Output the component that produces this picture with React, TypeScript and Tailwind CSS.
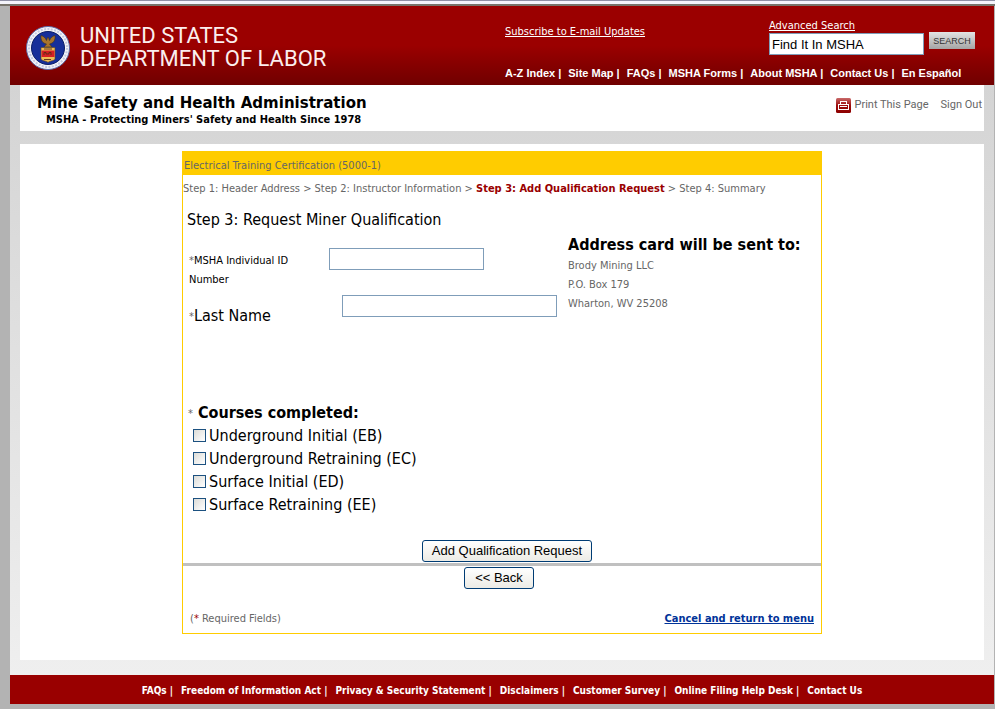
import { useState } from 'react'

const headerLinks = ['A-Z Index', 'Site Map', 'FAQs', 'MSHA Forms', 'About MSHA', 'Contact Us', 'En Español']

const footerLinks = [
  'FAQs',
  'Freedom of Information Act',
  'Privacy & Security Statement',
  'Disclaimers',
  'Customer Survey',
  'Online Filing Help Desk',
  'Contact Us',
]

const courses = [
  { code: 'EB', name: 'Underground Initial' },
  { code: 'EC', name: 'Underground Retraining' },
  { code: 'ED', name: 'Surface Initial' },
  { code: 'EE', name: 'Surface Retraining' },
]

function Seal() {
  return (
    <svg className="h-11 w-11 shrink-0" viewBox="0 0 44 44" aria-hidden="true">
      <circle cx="22" cy="22" r="21.5" fill="#f4f4f8" stroke="#5c6ba8" strokeWidth="1" />
      <circle cx="22" cy="22" r="19" fill="none" stroke="#c3c9e2" strokeWidth="2" strokeDasharray="2 1.4" />
      <circle cx="22" cy="22" r="16.5" fill="#172f9a" stroke="#0c1e66" strokeWidth="1" />
      <path d="M15 9.500c-.5 5 1.500 7.500 5.500 8.500l-2.500 3h8l-2.500-3c4-1 6-3.500 5.500-8.500-2.500.5-4.500 2.500-5.500 5l-1-3h-1l-1 3c-1-2.500-3-4.500-5.500-5z" fill="#a8742c" stroke="#40301c" strokeWidth=".6" />
      <path d="M15 21.500h14v11c0 2.500-5 2-7 4-2-2-7-1.500-7-4z" fill="#efbb55" stroke="#5a4320" strokeWidth=".6" />
      <path d="M15.500 24.500h13v6.500h-13z" fill="#d51f24" />
      <path d="M18 29v-2.500h2v1.500h3v-1.500h2v2.500M18 33.500h7M18 23h8" fill="none" stroke="#5c2a14" strokeWidth=".9" />
    </svg>
  )
}

function PrintIcon() {
  return (
    <svg className="h-[15px] w-[15px] shrink-0" viewBox="0 0 15 15" aria-hidden="true">
      <defs>
        <linearGradient id="print-bg" x1="0" y1="0" x2="0" y2="1">
          <stop offset="0" stopColor="#c96a6a" />
          <stop offset=".5" stopColor="#9d0d0d" />
          <stop offset="1" stopColor="#8d0000" />
        </linearGradient>
      </defs>
      <rect width="15" height="15" rx="1.500" fill="url(#print-bg)" />
      <path d="M4 3h7v3h2v6H2V6h2zM5 4v2h5V4zM3 7v4h9V7z" fill="#fff" fillRule="evenodd" />
      <path d="M4 8h7v1H4z" fill="#fff" />
    </svg>
  )
}

function Header() {
  const [query, setQuery] = useState('Find It In MSHA')

  return (
    <header className="flex h-[79px] justify-between bg-linear-to-b from-[#9b0000] from-50% to-[#700000] pl-4 text-white">
      <div className="flex items-center gap-2.5 pt-1">
        <Seal />
        <p className="mb-0.5 font-['Roboto','Liberation_Sans',sans-serif] text-[22px] leading-[23px] text-[#fbeeee]">
          UNITED STATES
          <br />
          DEPARTMENT OF LABOR
        </p>
      </div>
      <div className="flex w-[489px] flex-col justify-between pt-3.5 pb-1">
        <div className="flex">
          <a href="#subscribe" className="mt-1 w-[264px] text-[11px] leading-4 underline">
            Subscribe to E-mail Updates
          </a>
          <form className="flex items-end gap-[5px]" onSubmit={(event) => event.preventDefault()}>
            <div className="flex flex-col">
              <a href="#advanced" className="text-[11px] leading-3 underline">
                Advanced Search
              </a>
              <input
                aria-label="Search MSHA"
                className="mt-px h-[22px] w-[155px] border border-[#7f9db9] bg-white px-0.5 font-['Liberation_Sans',sans-serif] text-[13px] text-black outline-none"
                value={query}
                onChange={(event) => setQuery(event.target.value)}
              />
            </div>
            <button
              type="submit"
              className="mb-1.5 h-[17px] w-[46px] bg-linear-to-b from-[#e3e3e3] to-[#a5a5a5] font-['Liberation_Sans',sans-serif] text-[9px] leading-4 text-[#333]"
            >
              SEARCH
            </button>
          </form>
        </div>
        <nav className="flex gap-[7px] font-['Liberation_Sans',sans-serif] text-[11px] leading-4 font-bold whitespace-nowrap">
          {headerLinks.map((link, index) => (
            <span key={link}>
              <a href="#nav">{link}</a>
              {index < headerLinks.length - 1 ? ' |' : ''}
            </span>
          ))}
        </nav>
      </div>
    </header>
  )
}

function Breadcrumb() {
  return (
    <p className="mt-1 text-[11px] leading-[19px] text-[#666]">
      Step 1: Header Address &gt; Step 2: Instructor Information &gt;{' '}
      <strong className="text-[#900]">Step 3: Add Qualification Request</strong> &gt; Step 4: Summary
    </p>
  )
}

function QualificationForm() {
  const [minerId, setMinerId] = useState('')
  const [lastName, setLastName] = useState('')
  const [selected, setSelected] = useState<string[]>([])

  const toggleCourse = (code: string) => {
    setSelected((prev) => (prev.includes(code) ? prev.filter((item) => item !== code) : [...prev, code]))
  }

  const buttonClass =
    "h-[22px] rounded-[3px] border border-[#003c74] bg-linear-to-b from-white to-[#ecebe5] font-['Liberation_Sans',sans-serif] text-[13px] leading-5"

  return (
    <form onSubmit={(event) => event.preventDefault()}>
      <h1 className="mt-3 pl-1 text-[16px] leading-5">Step 3: Request Miner Qualification</h1>

      <div className="flex">
        <div className="w-[385px] pt-[18px] pl-1.5">
          <div className="flex items-start">
            <label htmlFor="miner-id" className="mt-[3px] w-[140px] text-[11px] leading-[19px]">
              <span className="block">
                <span className="text-[#666]">*</span>MSHA Individual ID
              </span>
              <span className="block">Number</span>
            </label>
            <input
              id="miner-id"
              className="h-[22px] w-[155px] border border-[#7f9db9] px-1 text-[13px] outline-none"
              value={minerId}
              onChange={(event) => setMinerId(event.target.value)}
            />
          </div>
          <div className="mt-1.5 flex items-start">
            <label htmlFor="last-name" className="mt-[11px] w-[153px] text-[16px] leading-5">
              <span className="align-middle text-[11px] text-[#666]">*</span>Last Name
            </label>
            <input
              id="last-name"
              className="h-[22px] w-[215px] border border-[#7f9db9] px-1 text-[13px] outline-none"
              value={lastName}
              onChange={(event) => setLastName(event.target.value)}
            />
          </div>
        </div>
        <address className="pt-1 text-[11px] leading-[19px] text-[#666] not-italic">
          <h2 className="text-[16px] leading-[22px] font-bold text-black">Address card will be sent to:</h2>
          <p>Brody Mining LLC</p>
          <p>P.O. Box 179</p>
          <p>Wharton, WV 25208</p>
        </address>
      </div>

      <fieldset className="mt-[75px] pl-[5px]">
        <legend className="text-[16px] leading-[22px] font-bold">
          <span className="align-middle text-[11px] font-normal text-[#666]">*</span> Courses completed:
        </legend>
        {courses.map((course) => (
          <label key={course.code} className="flex h-[23px] items-center gap-[3px] pl-[5px] text-[16px] leading-[23px]">
            <input
              type="checkbox"
              className="h-[13px] w-[13px] appearance-none border border-[#1c5180] bg-linear-to-br from-[#dcdcd7] to-white checked:bg-[#1c5180] checked:bg-none"
              checked={selected.includes(course.code)}
              onChange={() => toggleCourse(course.code)}
            />
            {course.name} ({course.code})
          </label>
        ))}
      </fieldset>

      <div className="mt-6 flex justify-center pl-2.5">
        <button type="submit" className={`${buttonClass} w-[170px]`}>
          Add Qualification Request
        </button>
      </div>
      <hr className="my-px border-t-[3px] border-[#c0c0c0]" />
      <div className="flex justify-center pr-1.5">
        <button type="button" className={`${buttonClass} w-[70px]`}>
          &lt;&lt; Back
        </button>
      </div>

      <div className="mt-5 flex justify-between pr-[7px] pb-[5px] pl-[7px] text-[11px] leading-[19px]">
        <p className="text-[#666]">
          (<span className="text-[#900]">*</span> Required Fields)
        </p>
        <a href="#menu" className="font-bold text-[#039] underline">
          Cancel and return to menu
        </a>
      </div>
    </form>
  )
}

export default function App() {
  return (
    <div className="min-h-screen bg-[#b3b3b3] font-['DejaVu_Sans_Condensed','DejaVu_Sans',sans-serif] text-black">
      <div className="h-1.5 border-t border-b-2 border-t-[#8f8fa5] border-b-[#77736a] bg-[#f4f3fa]" />
      <div className="mr-px ml-2.5">
        <Header />
        <div className="bg-linear-to-b from-[#d4d4d4] to-[#efefef] px-2.5 pb-[15px]">
          <div className="flex h-[46px] justify-between bg-white pr-0.5 pl-[17px]">
            <div className="pt-2">
              <p className="font-['DejaVu_Sans',sans-serif] text-[15px] leading-5 font-bold">
                Mine Safety and Health Administration
              </p>
              <p className="pl-[9px] text-[11px] leading-[14px] font-bold">
                MSHA - Protecting Miners&apos; Safety and Health Since 1978
              </p>
            </div>
            <div className="flex gap-3 pt-3 font-['Roboto','Liberation_Sans',sans-serif] text-[11px] leading-4 text-[#666]">
              <a href="#print" className="flex h-4 items-center gap-[3px]">
                <PrintIcon />
                Print This Page
              </a>
              <a href="#signout">Sign Out</a>
            </div>
          </div>

          <main className="mt-[13px] bg-white pt-[7px] pb-[26px]">
            <section className="mx-auto max-w-[640px] border border-[#fc0]">
              <p className="bg-[#fc0] pt-1 pl-px text-[11px] leading-[19px] text-[#666]">
                Electrical Training Certification (5000-1)
              </p>
              <Breadcrumb />
              <QualificationForm />
            </section>
          </main>
        </div>
        <footer className="flex h-[29px] items-center justify-center gap-2 bg-[#900] pt-0.5 text-[10px] font-bold whitespace-nowrap text-white">
          {footerLinks.map((link, index) => (
            <span key={link}>
              <a href="#footer">{link}</a>
              {index < footerLinks.length - 1 ? ' |' : ''}
            </span>
          ))}
        </footer>
      </div>
    </div>
  )
}
